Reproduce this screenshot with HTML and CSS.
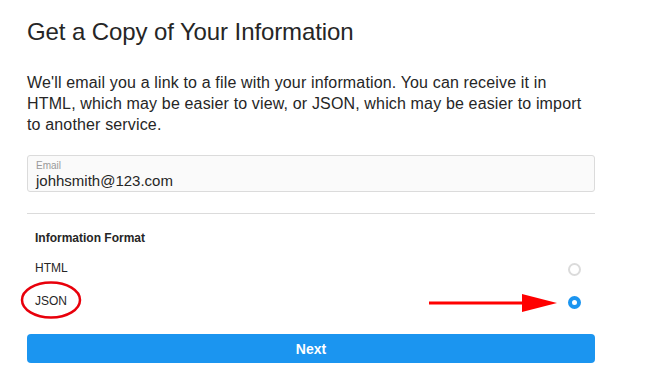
FILE: index.html
```html
<!DOCTYPE html>
<html lang="en">
  <head>
    <meta charset="UTF-8" />
    <title>Get a Copy of Your Information</title>
    <link rel="stylesheet" href="styles.css">
  </head>
  <body>
    <main class="page">
      <h1 class="page-title">Get a Copy of Your Information</h1>
      <p class="intro">
        We'll email you a link to a file with your information. You can receive it in<br />
        HTML, which may be easier to view, or JSON, which may be easier to import<br />
        to another service.
      </p>

      <div class="field">
        <span class="field-label">Email</span>
        <span class="field-value">johhsmith@123.com</span>
      </div>

      <hr class="divider" />

      <section class="format">
        <h2 class="format-title">Information Format</h2>
        <div class="options">
          <div class="option">
            <span class="option-name">HTML</span>
            <span class="radio"></span>
          </div>
          <div class="option">
            <span class="option-name">JSON</span>
            <span class="radio checked"></span>
          </div>
        </div>
      </section>

      <button class="next-btn">Next</button>

      <!-- red annotations drawn over the screenshot -->
      <svg class="mark-circle" width="64" height="40" viewBox="0 0 64 40">
        <ellipse cx="31" cy="19" rx="29" ry="17.5" fill="none" stroke="#e8000b" stroke-width="2.5" />
      </svg>
      <svg class="mark-arrow" width="132" height="22" viewBox="0 0 132 22">
        <rect x="0" y="9.5" width="96" height="3" fill="#f00" />
        <polygon points="93,2 128,11 93,20" fill="#f00" />
      </svg>
    </main>
  </body>
</html>
```

FILE: styles.css
```css
body {
  margin: 0;
  background-color: #fff;
  font-family: "Liberation Sans", Arial, sans-serif;
  color: #262626;
}

.page {
  position: relative;
  width: 568px;
  padding: 18px 0 0 27px;
}

.page-title {
  margin: 0;
  font-size: 24px;
  line-height: 28px;
  font-weight: normal;
  letter-spacing: -0.1px;
  color: #262626;
}

.intro {
  width: 600px;
  margin: 26px 0 0;
  font-size: 16px;
  line-height: 21px;
  letter-spacing: 0.15px;
}

.field {
  display: flex;
  flex-direction: column;
  height: 35px;
  margin-top: 20px;
  padding: 0 8px;
  background-color: #fafafa;
  border: 1px solid #dbdbdb;
  border-radius: 3px;
}

.field-label {
  margin-top: 4px;
  font-size: 10px;
  line-height: 12px;
  color: #999;
}

.field-value {
  font-size: 15px;
  line-height: 18px;
  color: #262626;
}

.divider {
  height: 1px;
  margin: 21px 0 0;
  border: 0;
  background-color: #dbdbdb;
}

.format {
  padding: 0 14px 0 8px;
}

.format-title {
  margin: 16px 0 0;
  font-size: 12px;
  line-height: 16px;
  font-weight: bold;
}

.options {
  margin-top: 7px;
}

.option {
  display: flex;
  align-items: center;
  justify-content: space-between;
  height: 33px;
}

.option-name {
  position: relative;
  top: -2px;
  font-size: 12px;
}

.radio {
  box-sizing: border-box;
  width: 13px;
  height: 13px;
  border: 2px solid #dbdbdb;
  border-radius: 50%;
}

.radio.checked {
  border: 4px solid #1b95f0;
}

.next-btn {
  display: block;
  width: 568px;
  height: 29px;
  margin-top: 15px;
  border: 0;
  border-radius: 4px;
  background-color: #1b95f0;
  color: #fff;
  font-family: "Liberation Sans", Arial, sans-serif;
  font-size: 14px;
  font-weight: bold;
}

.mark-circle {
  position: absolute;
  left: 20px;
  top: 281px;
}

.mark-arrow {
  position: absolute;
  left: 429px;
  top: 292px;
}
```
